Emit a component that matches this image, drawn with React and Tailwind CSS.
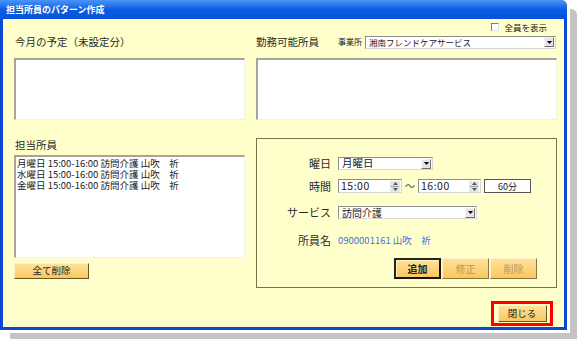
import React from 'react';

const font = "font-['Noto_Sans_CJK_JP','Noto_Sans_CJK_SC',sans-serif]";

function DropArrow() {
  return (
    <div className="flex h-[10px] w-[10px] items-center justify-center border border-t-[#f4f4f4] border-l-[#f4f4f4] border-b-[#707070] border-r-[#707070] bg-[#e4e4e4]">
      <svg width="5" height="3" viewBox="0 0 5 3">
        <polygon points="0,0 5,0 2.5,3" fill="#000" />
      </svg>
    </div>
  );
}

function Spin() {
  return (
    <div className="flex h-[11px] w-[10px] flex-col items-center justify-center gap-[1px] bg-[#e6e6e6]">
      <svg width="5" height="3" viewBox="0 0 5 3">
        <polygon points="2.5,0 5,3 0,3" fill="#555" />
      </svg>
      <div className="h-[1px] w-[8px] bg-[#999]" />
      <svg width="5" height="3" viewBox="0 0 5 3">
        <polygon points="0,0 5,0 2.5,3" fill="#555" />
      </svg>
    </div>
  );
}

function Select({ value, className, textClass }) {
  return (
    <div className={`flex items-center justify-between border border-t-[#8c8c8c] border-l-[#8c8c8c] border-b-[#d8d8d8] border-r-[#d8d8d8] bg-white pl-[3px] pr-[1px] ${className}`}>
      <span className={`text-[#222] ${textClass}`}>{value}</span>
      <DropArrow />
    </div>
  );
}

function TimeInput({ value, className }) {
  return (
    <div className={`flex h-[14px] items-center justify-between border border-t-[#8c8c8c] border-l-[#8c8c8c] border-b-[#d8d8d8] border-r-[#d8d8d8] bg-white pl-[2px] pr-[1px] ${className}`}>
      <span className="text-[10.5px] leading-none tracking-[0.5px] text-[#222]">{value}</span>
      <Spin />
    </div>
  );
}

function Label({ children }) {
  return (
    <div className="mr-[7px] w-[74px] text-right text-[11px] leading-none text-[#2a2a2a]">{children}</div>
  );
}

export default function App() {
  const assigned = [
    '月曜日 15:00-16:00 訪問介護 山吹　祈',
    '水曜日 15:00-16:00 訪問介護 山吹　祈',
    '金曜日 15:00-16:00 訪問介護 山吹　祈'
  ];

  return (
    <div className={`h-[339px] w-[577px] overflow-hidden bg-white ${font}`}>
      <div className="flex h-[330px] w-[567px] flex-col rounded-tr-[6px] border-x-[3px] border-b-[3px] border-[#0b48d6] shadow-[0_0_0_3px_#ffffff,10px_9px_0_#c4c4c4]">
        {/* Title bar */}
        <div className="-mx-[3px] flex h-[19px] items-center rounded-tr-[6px] bg-gradient-to-b from-[#4a94f7] via-[#0b5de6] to-[#0752d8] pl-[6px]">
          <span className="text-[9px] font-bold leading-none text-white">担当所員のパターン作成</span>
        </div>

        {/* Body */}
        <div className="flex flex-1 flex-col bg-[#ffffcc] pl-[11px] pr-[7px]">
          <div className="flex h-[13px] items-end justify-end pr-[10px]">
            <div className="flex items-center gap-[5px]">
              <div className="h-[8px] w-[8px] border border-t-[#808080] border-l-[#808080] border-b-[#e0e0e0] border-r-[#e0e0e0] bg-white" />
              <span className="text-[8.5px] leading-[10px] text-[#222]">全員を表示</span>
            </div>
          </div>

          <div className="flex gap-[11px]">
            {/* Left column */}
            <div className="flex w-[231px] flex-col">
              <div className="flex h-[26px] items-center pb-[6px] pl-[1px] text-[10.5px] text-[#2a2a2a]">今月の予定（未設定分）</div>
              <div className="h-[62px] border-t-2 border-l-2 border-b border-r border-t-[#a8a498] border-l-[#a8a498] border-b-[#f2f2ea] border-r-[#f2f2ea] bg-white" />
              <div className="flex h-[35px] items-end pb-[5px] pl-[1px] text-[10.5px] leading-none text-[#2a2a2a]">担当所員</div>
              <div className="h-[103px] border-t-2 border-l-2 border-b border-r border-t-[#a8a498] border-l-[#a8a498] border-b-[#f2f2ea] border-r-[#f2f2ea] bg-white pl-[1px] pt-[1px]">
                {assigned.map((line, i) => (
                  <div key={i} className="text-[9.5px] leading-[11px] text-[#222]">{line}</div>
                ))}
              </div>
              <button className="mt-[5px] flex h-[16px] w-[75px] items-center justify-center border border-t-[#fff2c4] border-l-[#fff2c4] border-b-[#6a5420] border-r-[#6a5420] bg-gradient-to-b from-[#ffe19a] to-[#f8c85c] text-[9.5px] leading-none text-[#222]">
                全て削除
              </button>
            </div>

            {/* Right column */}
            <div className="flex w-[301px] flex-col">
              <div className="flex h-[26px] items-center pb-[6px]">
                <span className="w-[82px] text-[10.5px] text-[#2a2a2a]">勤務可能所員</span>
                <span className="w-[27px] text-[8px] text-[#222]">事業所</span>
                <Select value="湘南フレンドケアサービス" className="h-[13px] w-[191px]" textClass="text-[8.5px] leading-none" />
              </div>
              <div className="h-[62px] border-t-2 border-l-2 border-b border-r border-t-[#a8a498] border-l-[#a8a498] border-b-[#f2f2ea] border-r-[#f2f2ea] bg-white" />

              {/* Group box */}
              <div className="mt-[18px] flex h-[150px] flex-col border border-[#77714c] pt-[18px] pb-[8px]">
                <div className="flex h-[13px] items-center">
                  <Label>曜日</Label>
                  <Select value="月曜日" className="h-[13px] w-[95px]" textClass="text-[10.5px] leading-none" />
                </div>
                <div className="mt-[9px] flex h-[14px] items-center">
                  <Label>時間</Label>
                  <TimeInput value="15:00" className="w-[64px]" />
                  <span className="w-[16px] text-center text-[10px] leading-none text-[#444]">～</span>
                  <TimeInput value="16:00" className="w-[63px]" />
                  <div className="ml-[3px] flex h-[14px] w-[47px] items-center justify-center border border-[#555] bg-white text-[9px] leading-none text-[#222]">60分</div>
                </div>
                <div className="mt-[13px] flex h-[13px] items-center">
                  <Label>サービス</Label>
                  <Select value="訪問介護" className="h-[13px] w-[139px]" textClass="text-[10px] leading-none" />
                </div>
                <div className="mt-[16px] flex h-[12px] items-center">
                  <Label>所員名</Label>
                  <span className="text-[9.5px] leading-none text-[#4a6fd4]">0900001161 山吹　祈</span>
                </div>
                <div className="mt-[12px] flex justify-end gap-[1px] pr-[19px]">
                  <button className="flex h-[21px] w-[47px] items-center justify-center border-2 border-t-[#2a2414] border-l-[#2a2414] border-b-[#1a1408] border-r-[#1a1408] bg-gradient-to-b from-[#ffe19a] to-[#f8c85c] text-[10px] font-bold leading-none text-[#222] shadow-[inset_1px_1px_0_#fff2c4]">
                    追加
                  </button>
                  <button className="flex h-[21px] w-[47px] items-center justify-center border border-t-[#fff2c4] border-l-[#fff2c4] border-b-[#8a7440] border-r-[#8a7440] bg-gradient-to-b from-[#ffe19a] to-[#f8c85c] text-[10px] leading-none text-[#b89a5c]">
                    修正
                  </button>
                  <button className="flex h-[21px] w-[47px] items-center justify-center border border-t-[#fff2c4] border-l-[#fff2c4] border-b-[#8a7440] border-r-[#8a7440] bg-gradient-to-b from-[#ffe19a] to-[#f8c85c] text-[10px] leading-none text-[#b89a5c]">
                    削除
                  </button>
                </div>
              </div>
            </div>
          </div>

          {/* Close */}
          <div className="mt-[13px] flex justify-end pr-[4px]">
            <div className="flex h-[25px] w-[62px] items-center justify-center border-[3px] border-[#ff0000]">
              <button className="flex h-[17px] w-[49px] items-center justify-center border border-t-[#fff2c4] border-l-[#fff2c4] border-b-[#6a5420] border-r-[#6a5420] bg-gradient-to-b from-[#ffe19a] to-[#f8c85c] text-[9.5px] leading-none text-[#222]">
                閉じる
              </button>
            </div>
          </div>
        </div>
      </div>
    </div>
  );
}
